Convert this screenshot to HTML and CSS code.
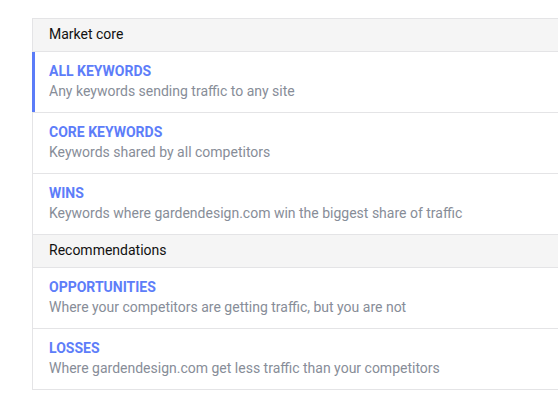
FILE: index.html
```html
<!DOCTYPE html>
<html lang="en">
<head>
<meta charset="utf-8">
<title>Keyword groups</title>
<link rel="stylesheet" href="styles.css">
</head>
<body>
<div class="panel">
  <div class="section-head">Market core</div>
  <div class="item active">
    <div class="item-title">ALL KEYWORDS</div>
    <div class="item-desc">Any keywords sending traffic to any site</div>
  </div>
  <div class="item">
    <div class="item-title">CORE KEYWORDS</div>
    <div class="item-desc">Keywords shared by all competitors</div>
  </div>
  <div class="item">
    <div class="item-title">WINS</div>
    <div class="item-desc">Keywords where gardendesign.com win the biggest share of traffic</div>
  </div>
  <div class="section-head">Recommendations</div>
  <div class="item">
    <div class="item-title">OPPORTUNITIES</div>
    <div class="item-desc">Where your competitors are getting traffic, but you are not</div>
  </div>
  <div class="item">
    <div class="item-title">LOSSES</div>
    <div class="item-desc">Where gardendesign.com get less traffic than your competitors</div>
  </div>
</div>
</body>
</html>
```
FILE: styles.css
```css
html, body {
  margin: 0;
  padding: 0;
  background: #ffffff;
  overflow: hidden;
}
body {
  padding: 18px 0 0 32px;
  font-family: Roboto, "Liberation Sans", Arial, sans-serif;
}
.panel {
  border-top: 1px solid #e4e4e6;
  border-left: 1px solid #e4e4e6;
  background: #ffffff;
  display: flex;
  flex-direction: column;
}
.section-head {
  background: #f5f5f5;
  border-bottom: 1px solid #e4e4e6;
  height: 33px;
  box-sizing: border-box;
  padding: 5px 16px 7px;
  font-size: 14px;
  line-height: 20px;
  color: #111111;
}
.item {
  position: relative;
  border-bottom: 1px solid #e4e4e6;
  padding: 11px 16px 10px;
  height: 61px;
  box-sizing: border-box;
}
.item.active::before {
  content: "";
  position: absolute;
  left: -1px;
  top: 0;
  bottom: 0;
  width: 3px;
  background: #5b7cf8;
}
.item-title {
  font-size: 14px;
  line-height: 16px;
  font-weight: 700;
  color: #5d7df9;
  white-space: nowrap;
}
.item-desc {
  padding-top: 2px;
  font-size: 14px;
  line-height: 21px;
  color: #878d98;
  white-space: nowrap;
}
```
